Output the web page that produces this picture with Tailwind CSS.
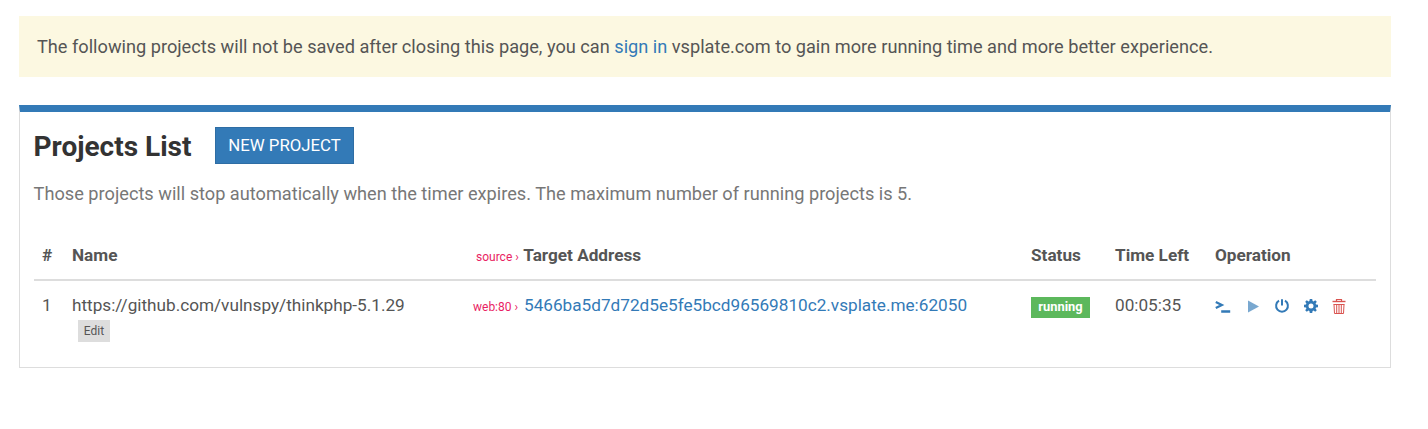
<!DOCTYPE html>
<html lang="en"><head><meta charset="utf-8"><title>Projects List</title>
<script src="https://cdn.jsdelivr.net/npm/@tailwindcss/browser@4"></script></head>
<body class="bg-white font-['Roboto',sans-serif] text-[#555]">
<main class="pt-4 pl-[19px] pr-[37px]">
<div class="h-[61px] flex items-center bg-[#fcf8e1] pl-[18px] text-[18.18px] whitespace-nowrap"><p>The following projects will not be saved after closing this page, you can <a class="text-[#337ab7]">sign in</a> vsplate.com to gain more running time and more better experience.</p></div>
<section class="mt-7 h-[263px] border border-[#ddd] border-t-[7px] border-t-[#337ab7] px-[14px] pt-[15px]">
<header class="flex items-center h-[37px]"><h1 class="-ml-[0.5px] w-[181.5px] pt-[2px] text-[28px] font-bold text-[#333]">Projects List</h1><button class="h-[37px] w-[139px] bg-[#337ab7] border border-[#2e6da4] text-white text-[16.8px]">NEW PROJECT</button></header>
<p class="-ml-[0.4px] mt-[16px] text-[18.18px] leading-[28px] text-[#777]">Those projects will stop automatically when the timer expires. The maximum number of running projects is 5.</p>
<div class="mt-[27px] grid grid-cols-[38px_401px_558px_84px_100px_1fr] h-[46px] items-center border-b-2 border-[#ddd] pb-[2px] font-bold text-[17.18px]">
<div class="pl-2">#</div><div>Name</div><div class="flex items-baseline pl-[3px]"><span class="w-[47.3px] text-[12px] font-normal text-[#e91e63]">source ›</span>Target Address</div><div>Status</div><div>Time Left</div><div>Operation</div></div>
<div class="grid grid-cols-[38px_401px_558px_84px_100px_1fr] pt-[11px] text-[17.18px] leading-[26px] whitespace-nowrap">
<div class="pl-2">1</div>
<div>https://github.com/vulnspy/thinkphp-5.1.29<button class="ml-[6px] mt-[2px] block h-[22px] w-[32px] bg-[#ddd] text-[12px] leading-[22px]">Edit</button></div>
<div class="flex h-[26px] items-baseline"><span class="w-[51px] text-[12px] text-[#e91e63]">web:80 ›</span><a class="text-[#337ab7]">5466ba5d7d72d5e5fe5bcd96569810c2.vsplate.me:62050</a></div>
<div><span class="mt-[5px] block h-[21px] w-[59px] bg-[#5cb85c] text-center text-[12.9px] leading-[20px] font-bold text-white">running</span></div>
<div>00:05:35</div>
<div class="flex h-[26px] items-center pt-[3px] text-[#337ab7]">
<svg class="h-4 w-4" viewBox="0 0 16 16" fill="none" stroke="currentColor" stroke-width="2.3"><path d="M.8 3L6.800 6L.8 9M6.200 12.500H15.200"/></svg>
<svg class="ml-[15px] h-4 w-4 opacity-65" viewBox="0 0 16 16" fill="currentColor"><path d="M2 1.500L13 7.500L2 13.500Z"/></svg>
<svg class="ml-[12px] h-4 w-4" viewBox="0 0 16 16" fill="none" stroke="currentColor" stroke-width="2"><path d="M5 1.700A5.900 5.900 0 1 0 11 1.700M8 .2V6.500"/></svg>
<svg class="ml-[12.5px] h-4 w-4" viewBox="0 0 16 16" fill="currentColor" fill-rule="evenodd"><path transform="translate(0 -1)" d="M6.800 1h2.400l.4 2 .9.4 1.700-1.200 1.600 1.600-1.200 1.700.4.9 2 .4v2.400l-2 .4-.4.9 1.200 1.700-1.600 1.600-1.700-1.200-.9.4-.4 2H6.800l-.4-2-.9-.4-1.700 1.200-1.600-1.600 1.200-1.700-.4-.9-2-.4V6.800l2-.4.4-.9-1.200-1.700 1.600-1.600 1.700 1.200.9-.4zM8 5.500a2.500 2.500 0 1 0 0 5a2.500 2.500 0 1 0 0-5z"/></svg>
<svg class="ml-[12.5px] h-4 w-4 text-[#d9534f]" viewBox="0 0 16 16" fill="none" stroke="currentColor"><path d="M1.500 2.500H14.500" stroke-width="1.400"/><path d="M5.500 2.500V.5H10.500V2.500" stroke-width="1.200"/><path d="M2.500 5.500H13.500M3 5.500L3.500 14.500H12.500L13 5.500M5.700 5.500V14.500M8 5.500V14.500M10.300 5.500V14.500"/></svg>
</div></div>
</section></main></body></html>
